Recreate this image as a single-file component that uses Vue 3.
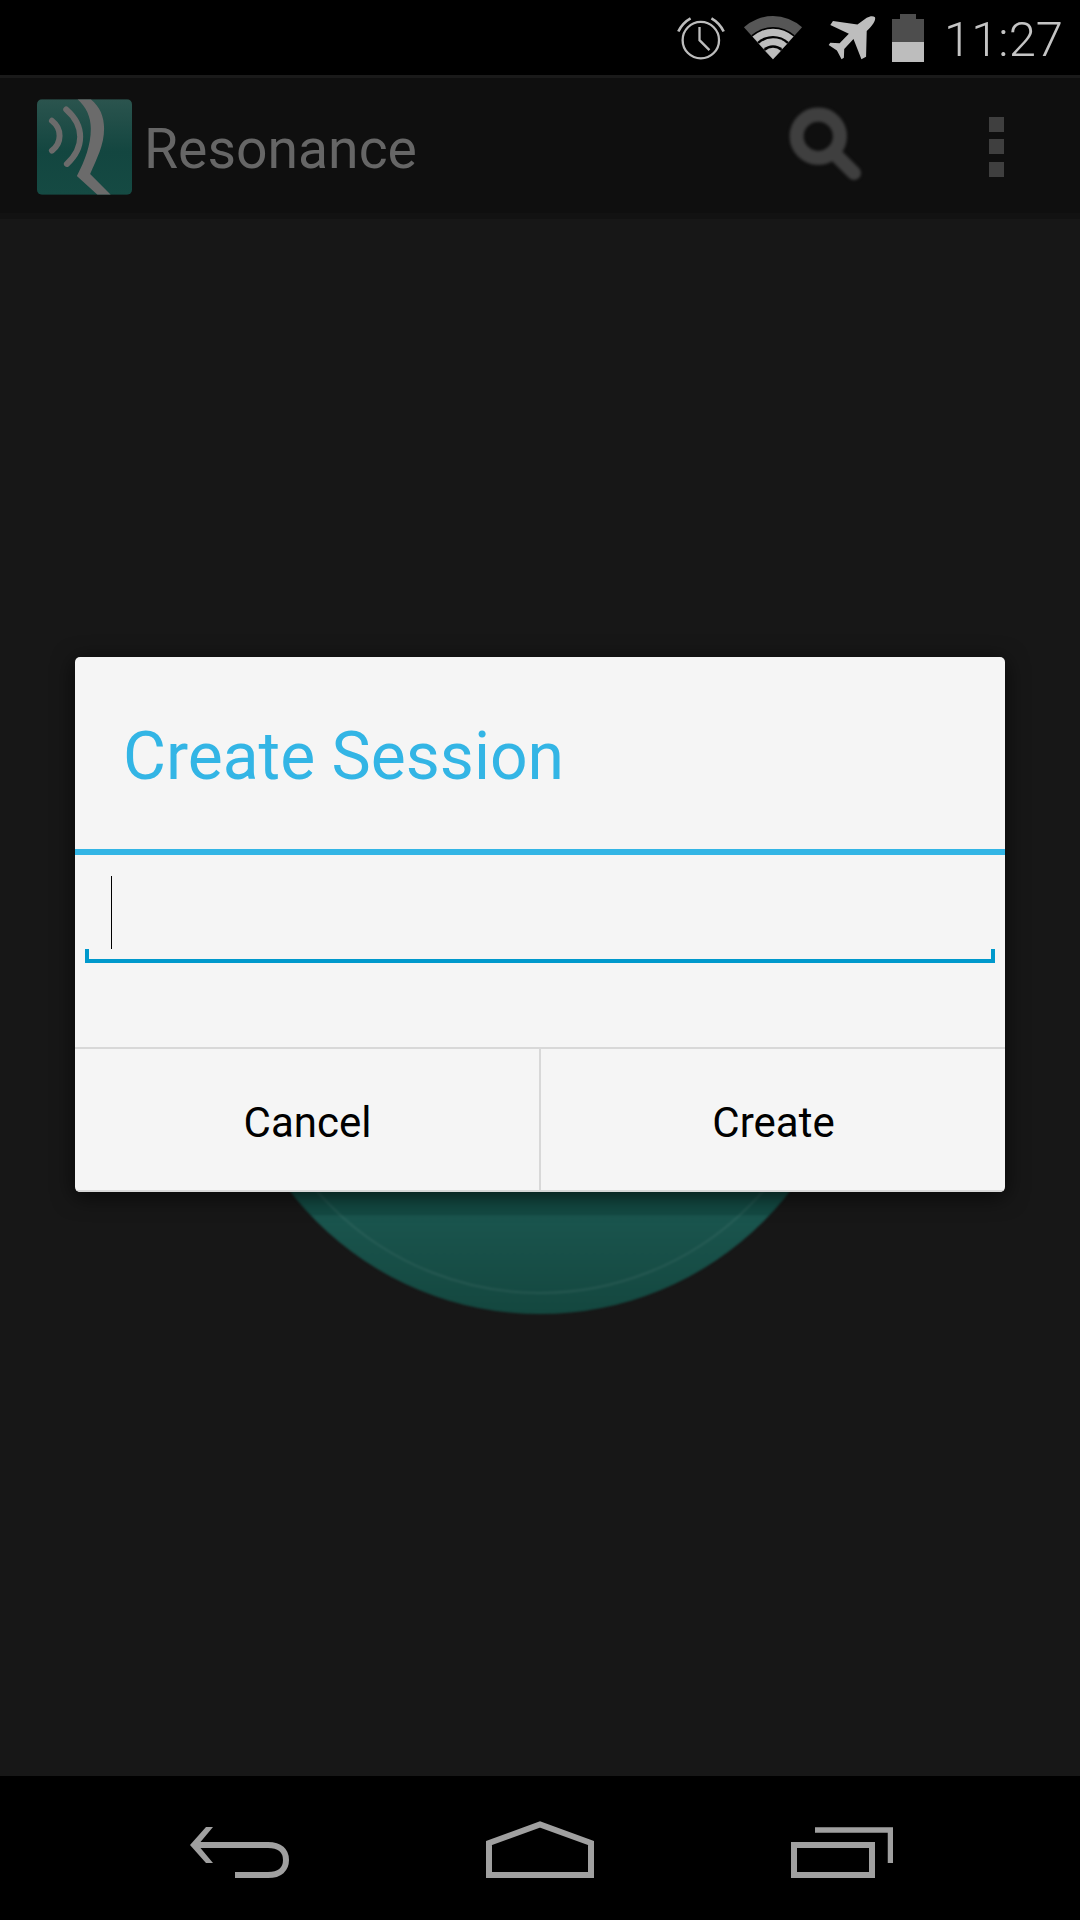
<template>
  <div class="screen">
    <div class="status-bar">
      <!-- viewBoxes are in 3x pixels, easier to trace the icons that way -->
      <svg class="alarm" viewBox="112 42 149 139" fill="none" stroke="#bdbdbd">
        <circle cx="186" cy="118" r="55" stroke-width="7" />
        <polyline points="182,78 182,118 212,148" stroke-width="7" />
        <path d="M118 92 Q130 66 155 52" stroke-width="8" />
        <path d="M218 52 Q243 66 255 92" stroke-width="8" />
      </svg>
      <svg class="wifi" viewBox="310 42 180 135">
        <path v-for="band in wifiBands" :key="band.r" :d="wedge(band.r)" :fill="band.fill" />
      </svg>
      <svg class="plane" viewBox="563 44 145 135">
        <path
          fill="#bdbdbd"
          d="M705 50 C708 60 698 74 680 92 L678 170 L664 177 L640 116 L612 146 L611 173 L604 177 L590 151 L565 134 L570 127 L598 129 L626 100 L570 74 L578 62 L652 72 L680 52 C690 46 700 46 705 50 Z"
        />
      </svg>
      <div class="battery">
        <div class="battery-cap"></div>
        <div class="battery-body">
          <div class="battery-level"></div>
        </div>
      </div>
      <span class="clock">11:27</span>
    </div>

    <div class="action-bar">
      <svg class="app-icon" viewBox="110 87 286 288">
        <defs>
          <linearGradient id="iconBg" x1="0" y1="0" x2="0" y2="1">
            <stop offset="0" stop-color="#2b544e" />
            <stop offset="0.55" stop-color="#134640" />
            <stop offset="1" stop-color="#154a43" />
          </linearGradient>
          <clipPath id="iconClip">
            <rect x="110" y="87" width="286" height="288" rx="15" />
          </clipPath>
        </defs>
        <g clip-path="url(#iconClip)">
          <rect x="110" y="87" width="286" height="288" fill="url(#iconBg)" />
          <path d="M155 152 Q178 170 178 197 Q178 224 155 242" fill="none" stroke="#6b6b6b" stroke-width="18" stroke-linecap="round" />
          <path d="M198 118 Q240 155 240 200 Q240 245 200 282" fill="none" stroke="#6b6b6b" stroke-width="18" stroke-linecap="round" />
          <path
            fill="#6b6b6b"
            d="M232 87 L272 87 C300 110 312 140 312 175 C312 225 290 265 270 312 L332 375 L292 375 L230 318 C255 270 272 225 272 175 C272 140 258 110 232 87 Z"
          />
        </g>
      </svg>
      <span class="app-title">Resonance</span>
      <svg class="search" viewBox="0 0 72 72" fill="none" stroke="#3f3f3f">
        <circle cx="27" cy="27" r="20" stroke-width="13" />
        <line x1="43" y1="44" x2="60" y2="61" stroke-width="13" stroke-linecap="round" />
      </svg>
      <div class="overflow">
        <span></span>
        <span></span>
        <span></span>
      </div>
    </div>

    <div class="content">
      <div class="big-button"></div>
    </div>

    <div class="nav-bar">
      <svg class="nav-back" viewBox="0 0 99 51" fill="none" stroke="#a0a0a0" stroke-width="6">
        <polygon points="0,18 16,0 23,0 8,18 23,36 16,36" fill="#a0a0a0" stroke="none" />
        <path d="M6 18 H78 C90 18 96 24 96 33 C96 42 90 48 78 48 H45" />
      </svg>
      <svg class="nav-home" viewBox="0 0 108 57" fill="none" stroke="#a0a0a0" stroke-width="6">
        <path d="M3 54 V22 L54 3.4 L105 22 V54 Z" />
      </svg>
      <svg class="nav-recents" viewBox="0 0 102 51" fill="none" stroke="#a0a0a0">
        <rect x="3" y="18" width="78" height="30" stroke-width="6" />
        <polyline points="24,3 99.5,3 99.5,36" stroke-width="5.5" />
      </svg>
    </div>

    <div class="overlay">
      <div class="dialog">
        <div class="dialog-title">Create Session</div>
        <div class="dialog-body">
          <div class="field">
            <div class="caret"></div>
          </div>
        </div>
        <div class="dialog-buttons">
          <div class="dialog-btn">Cancel</div>
          <div class="dialog-btn">Create</div>
        </div>
      </div>
    </div>
  </div>
</template>

<script setup>
const wifiBands = [
  { r: 130, fill: '#565656' },
  { r: 97, fill: '#000' },
  { r: 92, fill: '#bdbdbd' },
  { r: 70, fill: '#000' },
  { r: 63, fill: '#bdbdbd' },
  { r: 42, fill: '#000' },
  { r: 35, fill: '#bdbdbd' },
]

// pie slice from the bottom point of the wifi icon
function wedge(r) {
  const dx = (0.671 * r).toFixed(1)
  const dy = (0.741 * r).toFixed(1)
  return `M400 175 L${400 - dx} ${175 - dy} A${r} ${r} 0 0 1 ${400 + Number(dx)} ${175 - dy} Z`
}
</script>

<style scoped>
.screen {
  position: relative;
  width: 1080px;
  height: 1920px;
  display: flex;
  flex-direction: column;
  overflow: hidden;
  background: #171717;
  font-family: Roboto, "Noto Sans", sans-serif;
}

.status-bar {
  height: 75px;
  flex-shrink: 0;
  background: #000;
  display: flex;
  align-items: center;
  justify-content: flex-end;
  padding-right: 17px;
}

.alarm {
  width: 50px;
  height: 46px;
  margin-right: 17px;
}

.wifi {
  width: 60px;
  height: 45px;
  margin-right: 25px;
}

.plane {
  width: 48px;
  height: 45px;
  margin-right: 16px;
}

.battery {
  width: 32px;
  height: 48px;
  margin-right: 20px;
  display: flex;
  flex-direction: column;
  align-items: center;
}

.battery-cap {
  width: 16px;
  height: 5px;
  background: #4d4d4d;
}

.battery-body {
  flex: 1;
  width: 100%;
  background: #4d4d4d;
  display: flex;
  align-items: flex-end;
}

.battery-level {
  width: 100%;
  height: 45%;
  background: #bdbdbd;
}

.clock {
  font-size: 49px;
  font-weight: 300;
  color: #c4c4c4;
  line-height: 75px;
  padding-top: 3px;
}

.action-bar {
  height: 144px;
  flex-shrink: 0;
  box-sizing: border-box;
  background: #0f0f0f;
  border-top: 3px solid #1a1a1a;
  border-bottom: 6px solid #121212;
  display: flex;
  align-items: center;
  padding-left: 37px;
}

.app-icon {
  width: 95px;
  height: 96px;
  margin-top: 3px;
  margin-right: 12px;
}

.app-title {
  font-size: 55.3px;
  color: #666;
  padding-top: 7px;
}

.search {
  width: 78px;
  height: 78px;
  margin-left: auto;
  margin-right: 122px;
  filter: blur(1.5px);
}

.overflow {
  display: flex;
  flex-direction: column;
  gap: 7.5px;
  margin-top: 2px;
  margin-right: 76px;
}

.overflow span {
  display: block;
  width: 15px;
  height: 15px;
  background: #3f3f3f;
}

.content {
  flex: 1;
  display: flex;
  align-items: center;
  justify-content: center;
}

.big-button {
  position: relative;
  width: 632px;
  height: 632px;
  border-radius: 50%;
  background: linear-gradient(#134a43 84.3%, #1a554e 84.5%, #14473f 100%);
  filter: blur(1px);
}

.big-button::after {
  content: "";
  position: absolute;
  inset: 20px;
  border-radius: 50%;
  border: 2px solid rgba(255, 255, 255, 0.07);
}

.nav-bar {
  height: 144px;
  flex-shrink: 0;
  box-sizing: border-box;
  background: #000;
  display: flex;
  justify-content: center;
  align-items: flex-start;
  gap: 197px;
  padding: 45px 0 0 2px;
}

.nav-back {
  width: 99px;
  height: 51px;
  margin-top: 6px;
}

.nav-home {
  width: 108px;
  height: 57px;
}

.nav-recents {
  width: 102px;
  height: 51px;
  margin-top: 6px;
}

.overlay {
  position: absolute;
  inset: 0;
  display: flex;
  justify-content: center;
  align-items: flex-start;
  padding-top: 657px;
}

.dialog {
  width: 930px;
  height: 535px;
  display: flex;
  flex-direction: column;
  background: #f5f5f5;
  border-radius: 5px;
  box-shadow: 0 4px 22px rgba(0, 0, 0, 0.7);
  overflow: hidden;
}

.dialog-title {
  height: 198px;
  flex-shrink: 0;
  box-sizing: border-box;
  display: flex;
  align-items: center;
  padding: 7px 0 0 48px;
  font-size: 66px;
  color: #33b5e5;
  border-bottom: 6px solid #33b5e5;
}

.dialog-body {
  flex: 1;
  padding: 0 10px;
}

.field {
  position: relative;
  height: 108px;
  box-sizing: border-box;
  border-bottom: 4px solid #0099cc;
  padding: 21px 0 0 26px;
}

.field::before,
.field::after {
  content: "";
  position: absolute;
  bottom: 0;
  width: 4px;
  height: 10px;
  background: #0099cc;
}

.field::before {
  left: 0;
}

.field::after {
  right: 0;
}

.caret {
  width: 1px;
  height: 73px;
  background: #000;
}

.dialog-buttons {
  height: 145px;
  flex-shrink: 0;
  box-sizing: border-box;
  display: flex;
  border-top: 2px solid #d8d8d8;
  border-bottom: 2px solid #d8d8d8;
}

.dialog-btn {
  flex: 1;
  display: flex;
  align-items: center;
  justify-content: center;
  padding: 6px 0 0 1px;
  font-size: 42px;
  color: #000;
}

.dialog-btn + .dialog-btn {
  border-left: 2px solid #d8d8d8;
}
</style>

<style>
html,
body {
  margin: 0;
  background: #000;
}
</style>
